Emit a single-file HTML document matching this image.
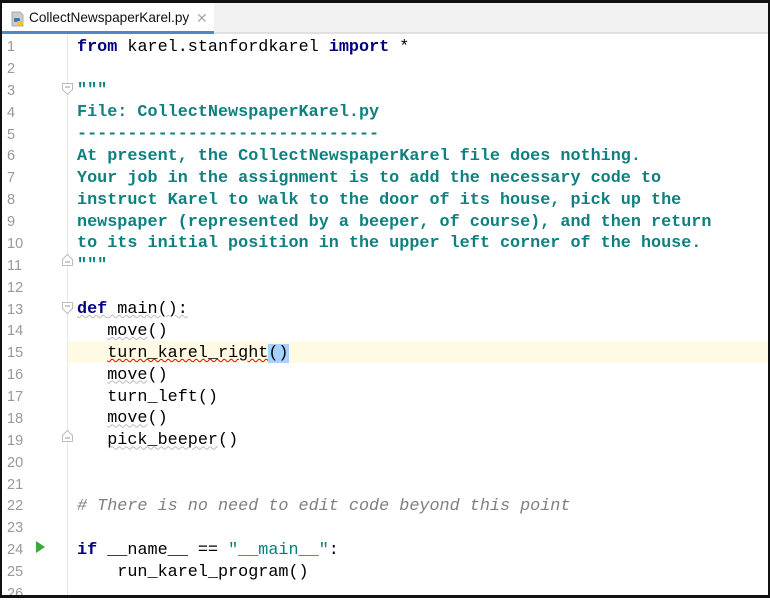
<!DOCTYPE html>
<html><head><meta charset="utf-8"><style>
*{margin:0;padding:0;box-sizing:border-box}
body{width:770px;height:598px;background:#fff;position:relative;overflow:hidden;font-family:"Liberation Mono",monospace}
.frame{position:absolute;left:0;top:0;width:770px;height:598px;border:2px solid #111;border-top-width:3px;border-bottom-width:3px}
.tabs{position:absolute;left:2px;top:3px;width:766px;height:31px;background:#f2f2f2;border-bottom:2px solid #e0e0e0}
.tab{position:absolute;left:0;top:0;width:212px;height:31px;background:#fff;border-bottom:3px solid #4a88c7;font-family:"Liberation Sans",sans-serif;font-size:13.6px;color:#111;line-height:30px;padding-left:27px}
.tab .x{position:absolute;left:194px;top:0;color:#aaa;font-size:14px}
.gutter{position:absolute;left:2px;top:34px;width:66px;height:561px;background:#fff;border-right:1px solid #e8e8e8}
.hl{position:absolute;left:2px;top:341px;width:766px;height:22px;background:#fffae3}
.ln{position:absolute;left:7px;font-size:14.5px;color:#999;font-family:"Liberation Sans",sans-serif}
.code{position:absolute;left:77px;font-size:16.8px;white-space:pre;color:#000;line-height:22px}
.kw{color:#000080;font-weight:bold}
.doc{color:#0f8080;font-weight:bold}
.cm{color:#808080;font-style:italic}
.str{color:#008080}
.sel{background:#a6d2ff}
.err{text-decoration:underline wavy #e00;text-decoration-thickness:1px}
.wv{text-decoration:underline wavy #bbb;text-decoration-thickness:1px}
.fold{position:absolute;left:62px}
</style></head><body>
<div class="tabs"><div class="tab">
<svg style="position:absolute;left:8px;top:8px" width="16" height="16" viewBox="0 0 16 16"><path d="M2 1h8l3 3v11H2z" fill="#ccc" stroke="#999" stroke-width=".8"/><rect x="4" y="7" width="6" height="4" rx="1" fill="#3c78b5"/><rect x="7" y="10" width="6" height="4" rx="1" fill="#f5c518"/></svg>
CollectNewspaperKarel.py<span class="x">✕</span></div></div>
<div class="hl"></div>
<div class="gutter"></div>
<div id="c"></div>
<svg class="fold" style="top:83px" width="12" height="12"><path d="M0.5 0.5h10v6l-5 5l-5-5z" fill="#fff" stroke="#bbb"/><path d="M3 4h5" stroke="#999"/></svg>
<svg class="fold" style="top:254px" width="12" height="12"><path d="M0.5 11.5h10v-6l-5-5l-5 5z" fill="#fff" stroke="#bbb"/><path d="M3 8h5" stroke="#999"/></svg>
<svg class="fold" style="top:302px" width="12" height="12"><path d="M0.5 0.5h10v6l-5 5l-5-5z" fill="#fff" stroke="#bbb"/><path d="M3 4h5" stroke="#999"/></svg>
<svg class="fold" style="top:430px" width="12" height="12"><path d="M0.5 11.5h10v-6l-5-5l-5 5z" fill="#fff" stroke="#bbb"/><path d="M3 8h5" stroke="#999"/></svg>
<svg style="position:absolute;left:35px;top:541px" width="10" height="12"><path d="M1 0L10 6L1 12z" fill="#3aa83a"/></svg>
<div class="frame"></div>
<script>
var lines=[
'<span class="kw">from</span> karel.stanfordkarel <span class="kw">import</span> *','',
'<span class="doc">"""</span>',
'<span class="doc">File: CollectNewspaperKarel.py</span>',
'<span class="doc">------------------------------</span>',
'<span class="doc">At present, the CollectNewspaperKarel file does nothing.</span>',
'<span class="doc">Your job in the assignment is to add the necessary code to</span>',
'<span class="doc">instruct Karel to walk to the door of its house, pick up the</span>',
'<span class="doc">newspaper (represented by a beeper, of course), and then return</span>',
'<span class="doc">to its initial position in the upper left corner of the house.</span>',
'<span class="doc">"""</span>','',
'<span class="kw wv">def</span><span class="wv"> main():</span>',
'   <span class="wv">move</span>()',
'   <span class="err">turn_karel_right</span><span class="sel">()</span>',
'   <span class="wv">move</span>()',
'   turn_left()',
'   <span class="wv">move</span>()',
'   <span class="wv">pick_beeper</span>()',
'','',
'<span class="cm"># There is no need to edit code beyond this point</span>','',
'<span class="kw">if</span> __name__ == <span class="str">"__main__"</span>:',
'    run_karel_program()',''];
var h='';
for(var i=0;i<lines.length;i++){var t=35+21.875*i;
h+='<div class="ln" style="top:'+(t+4)+'px">'+(i+1)+'</div>';
h+='<div class="code" style="top:'+(t+1.5)+'px">'+lines[i]+'</div>';}
document.getElementById('c').innerHTML=h;
</script>
</body></html>
